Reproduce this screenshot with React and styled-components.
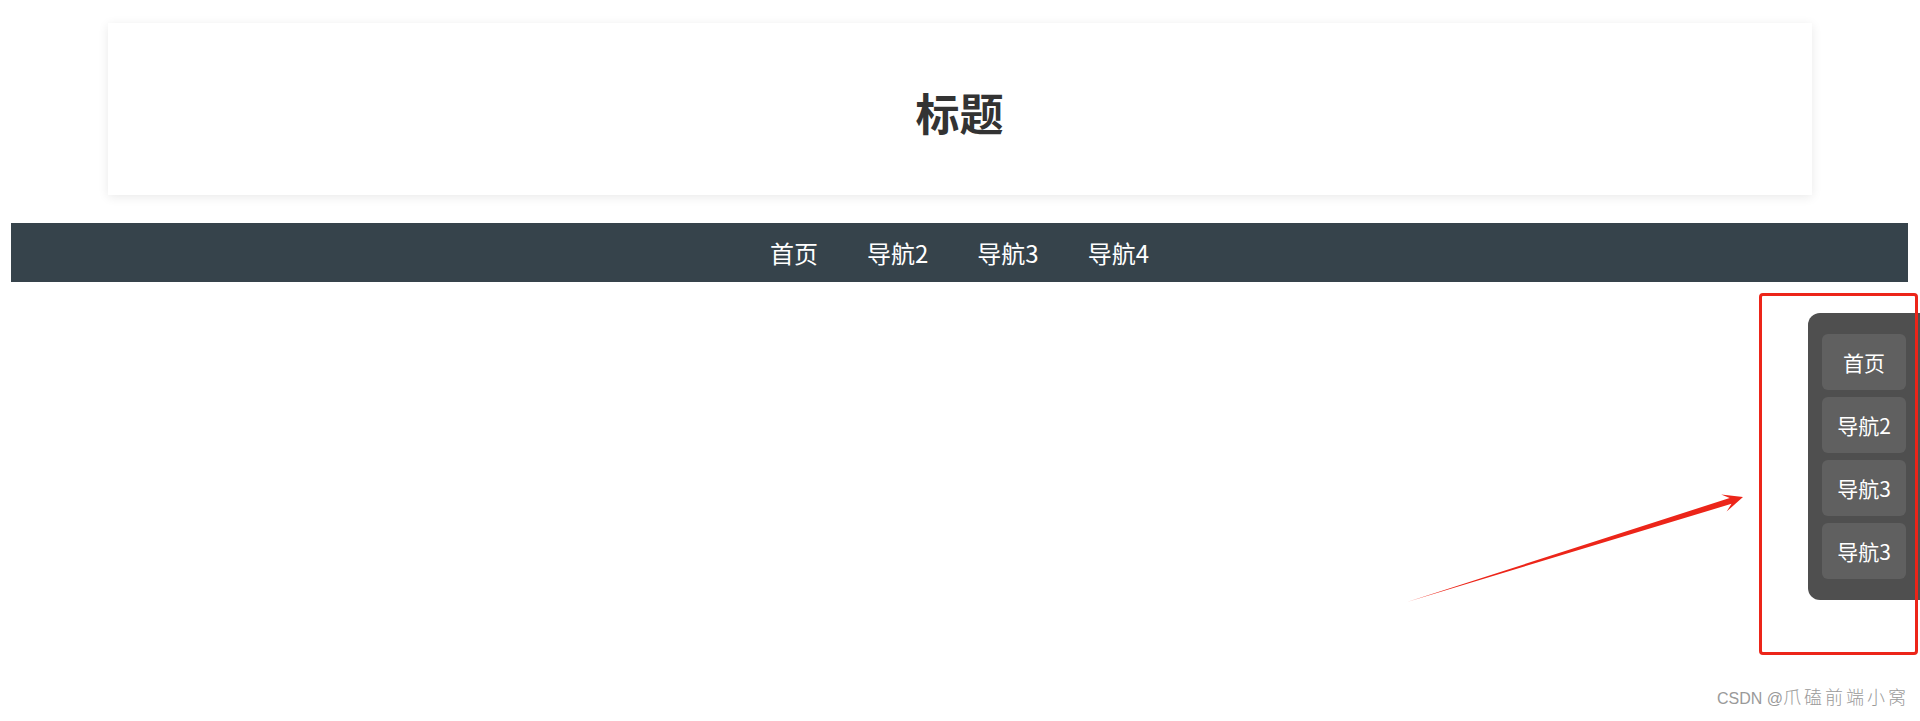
import React from "react";
import styled, { createGlobalStyle } from "styled-components";

const GlobalStyle = createGlobalStyle`
  html, body {
    margin: 0;
    padding: 0;
    background: #fff;
    font-family: "Noto Sans CJK SC", "Noto Sans", sans-serif;
  }
`;

const Page = styled.div`
  position: relative;
  box-sizing: border-box;
  min-height: 721px;
  padding: 23px 12px 0 11px;
  overflow: hidden;
`;

const HeaderCard = styled.header`
  width: 1704px;
  height: 172px;
  margin: 0 auto;
  background: #fff;
  box-shadow: 0 2px 10px rgba(0, 0, 0, 0.09);
  display: flex;
  align-items: center;
  justify-content: center;
`;

const Title = styled.h1`
  margin: 6px 0 0;
  font-size: 44px;
  font-weight: 700;
  color: #333;
  line-height: 1;
`;

const NavBar = styled.nav`
  margin-top: 28px;
  height: 59px;
  background: #36434b;
  display: flex;
  align-items: center;
  justify-content: center;
  gap: 49px;
`;

const NavLink = styled.a`
  color: #fff;
  font-size: 24px;
  text-decoration: none;
  line-height: 1;
`;

const SideNav = styled.aside`
  position: absolute;
  right: 0;
  top: 313px;
  width: 112px;
  box-sizing: border-box;
  padding: 21px 14px;
  background: #4f4f4f;
  border-radius: 12px 0 0 12px;
  display: flex;
  flex-direction: column;
  gap: 7px;
`;

const SideLink = styled.a`
  height: 56px;
  border-radius: 6px;
  background: #606060;
  color: #fff;
  font-size: 21px;
  text-decoration: none;
  display: flex;
  align-items: center;
  justify-content: center;
`;

// screenshot annotation: red frame + arrow
const Highlight = styled.div`
  position: absolute;
  left: 1759px;
  top: 293px;
  width: 159px;
  height: 362px;
  box-sizing: border-box;
  border: 3px solid #ec2519;
  border-radius: 4px;
  pointer-events: none;
`;

const ArrowLayer = styled.svg`
  position: absolute;
  left: 0;
  top: 0;
  pointer-events: none;
`;

const Watermark = styled.div`
  position: absolute;
  right: 14px;
  bottom: 12px;
  font-family: "Liberation Sans", "Noto Sans CJK SC", sans-serif;
  font-size: 16px;
  color: #9a9a9a;
  white-space: nowrap;
  display: flex;
  align-items: baseline;
`;

const WatermarkCjk = styled.span`
  font-family: "Noto Sans CJK SC", sans-serif;
  font-weight: 300;
  font-size: 18px;
  letter-spacing: 3px;
  margin-right: -3px;
`;

const topNav = ["首页", "导航2", "导航3", "导航4"];
const sideNav = ["首页", "导航2", "导航3", "导航3"];

const App = () => {
  return (
    <>
      <GlobalStyle />
      <Page>
        <HeaderCard>
          <Title>标题</Title>
        </HeaderCard>
        <NavBar>
          {topNav.map((item) => (
            <NavLink href="#" key={item}>
              {item}
            </NavLink>
          ))}
        </NavBar>

        <SideNav>
          {sideNav.map((item, i) => (
            <SideLink href="#" key={i}>
              {item}
            </SideLink>
          ))}
        </SideNav>

        <Highlight />
        <ArrowLayer width="1920" height="721" viewBox="0 0 1920 721">
          <polygon
            fill="#ec2519"
            points="1407,602 1731.5,503.8 1726.6,511.6 1743,497 1721.2,494.4 1729.7,498"
          />
        </ArrowLayer>

        <Watermark>
          CSDN&nbsp;@<WatermarkCjk>爪磕前端小窝</WatermarkCjk>
        </Watermark>
      </Page>
    </>
  );
};

export default App;
